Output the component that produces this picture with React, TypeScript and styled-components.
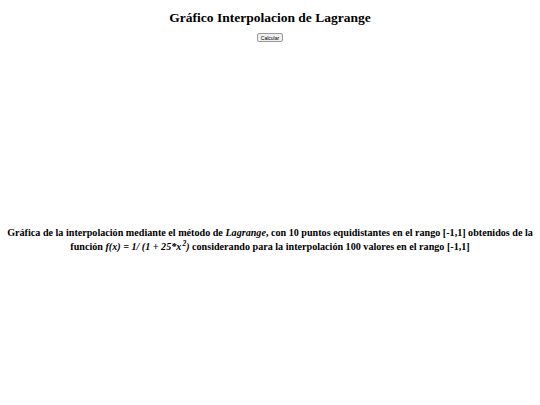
import React from "react";
import styled, { createGlobalStyle } from "styled-components";

const GlobalStyle = createGlobalStyle`
  html, body {
    margin: 0;
    padding: 0;
    background: #ffffff;
  }
  body {
    font-family: "Liberation Serif", "Times New Roman", serif;
    color: #000000;
  }
`;

const Page = styled.div`
  width: 540px;
  height: 405px;
  padding: 0 5px;
  box-sizing: border-box;
  text-align: center;
`;

const Title = styled.h2`
  margin: 0;
  padding-top: 10px;
  font-size: 13.5px;
  font-weight: bold;
  line-height: 16px;
`;

const Controls = styled.div`
  margin-top: 7px;
  line-height: 0;
`;

const Button = styled.button`
  font-family: "Liberation Sans", Arial, sans-serif;
  font-size: 5px;
  line-height: 6px;
  height: 9px;
  padding: 0 3px;
  color: #000;
  background: #efefef;
  border: 1px solid #9a9a9a;
  border-radius: 2px;
`;

const Chart = styled.canvas`
  display: block;
  margin: 0 auto;
  width: 400px;
  height: 184px;
`;

const Caption = styled.p`
  margin: 0;
  font-size: 10.15px;
  font-weight: bold;
  line-height: 14px;

  sup {
    font-size: 7.5px;
    line-height: 0;
    margin-left: 1px;
  }
`;

export default function App() {
  return (
    <>
      <GlobalStyle />
      <Page>
        <Title>Gráfico Interpolacion de Lagrange</Title>
        <Controls>
          <Button type="button">Calcular</Button>
        </Controls>
        <Chart width={400} height={184} />
        <Caption>
          Gráfica de la interpolación mediante el método de <i>Lagrange</i>, con 10 puntos
          equidistantes en el rango [-1,1] obtenidos de la función{" "}
          <i>f(x) = 1/ (1 + 25*x<sup>2</sup>)</i> considerando para la interpolación 100 valores
          en el rango [-1,1]
        </Caption>
      </Page>
    </>
  );
}
